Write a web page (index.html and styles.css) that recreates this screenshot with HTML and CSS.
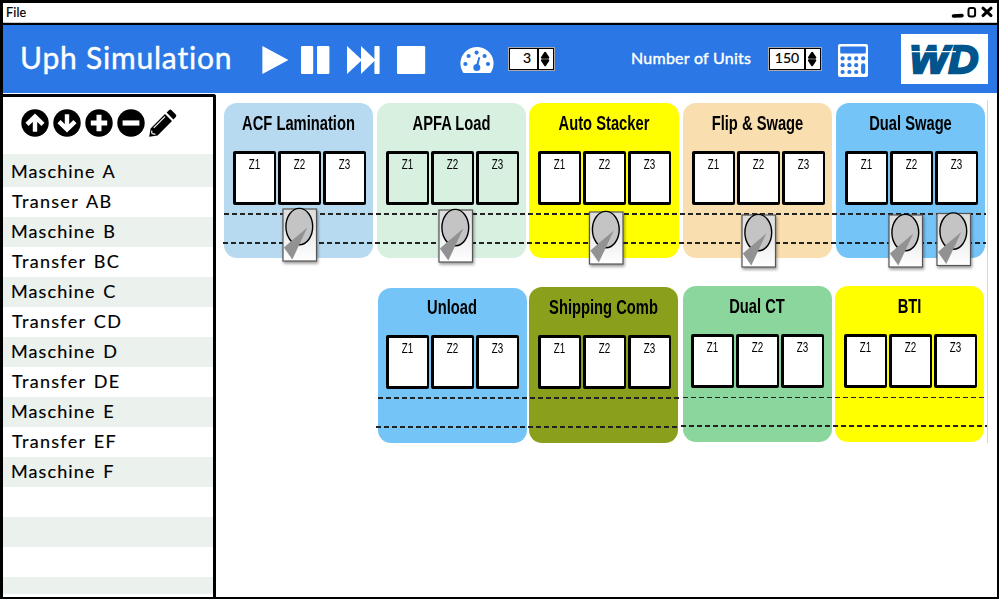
FILE: index.html
```
<!DOCTYPE html>
<html lang="en">
<head>
<meta charset="utf-8">
<title>Uph Simulation</title>
<link rel="stylesheet" href="styles.css">
</head>
<body>
<svg class="defs" width="0" height="0">
  <defs>
    <linearGradient id="plate" x1="0" y1="0" x2="0" y2="1"><stop offset="0" stop-color="#dcdcdc"/><stop offset="1" stop-color="#fff"/></linearGradient>
    <symbol id="wafer" viewBox="-2 -2 40 60">
      <rect x="0.5" y="1" width="33.5" height="52" fill="url(#plate)" stroke="#555" stroke-width="1.2"/>
      <ellipse cx="16.8" cy="18.6" rx="13.4" ry="18.2" fill="#c4c4c4" stroke="#000" stroke-width="1.4"/>
      <path d="M24.8 19.6 L9.8 51.6 L1.4 39.4 L10 32Z" fill="#929292"/>
    </symbol>
  </defs>
</svg>
<div class="window">
  <div class="titlebar">
    <span class="menu">File</span>
    <svg class="controls" width="44" height="17" viewBox="0 0 44 17">
      <path d="M3.5 13 L12 12.6" stroke="#000" stroke-width="3.6" stroke-linecap="round"/>
      <rect x="18.5" y="5" width="6.6" height="8.6" rx="2" fill="none" stroke="#000" stroke-width="2"/>
      <path d="M33 5.2 L41 12.6 M41 5.2 L33 12.6" stroke="#000" stroke-width="3" stroke-linecap="round"/>
    </svg>
  </div>
  <header class="header">
    <h1 class="title">Uph Simulation</h1>
    <svg class="player" width="164" height="30" viewBox="0 0 164 30" fill="#fff">
      <path d="M.4 1 L26.4 15 L.4 29Z"/>
      <rect x="39" y="1" width="12.2" height="28" rx="1.2"/><rect x="55" y="1" width="12.4" height="28" rx="1.2"/>
      <path d="M85 1 L99 14 V1 L112.4 14 V2 Q112.4 1 113.4 1 H116.6 Q117.6 1 117.6 2 V28 Q117.6 29 116.6 29 H113.4 Q112.4 29 112.4 28 V16 L99 29 V16 L85 29Z"/>
      <rect x="135" y="1" width="28.2" height="28" rx="1.2"/>
    </svg>
    <svg class="gauge" width="34" height="28" viewBox="0 0 34 28">
      <path d="M3 26.6 A16.6 16.6 0 1 1 31 26.6 Q30.6 27 30 27 H4 Q3.4 27 3 26.6Z" fill="#fff"/>
      <g fill="#2a77e5"><circle cx="5.4" cy="18" r="2.1"/><circle cx="8.6" cy="10" r="2.1"/><circle cx="16.6" cy="6.6" r="2.1"/><circle cx="24.6" cy="10" r="2.1"/><circle cx="28" cy="18" r="2.1"/><circle cx="16.8" cy="21.4" r="3.5"/><path d="M18.4 11 L20.2 11.4 L18 21 L15.8 20.4Z"/></g>
    </svg>
    <div class="spinner small"><span class="value">3</span><svg class="arrows" width="16" height="20" viewBox="0 0 16 20"><path d="M7 3 L10.6 8.4 H3.4Z M7 17 L10.6 11.6 H3.4Z" stroke="#000" stroke-width="2.4" stroke-linejoin="round"/></svg></div>
    <span class="units">Number of Units</span>
    <div class="spinner"><span class="value">150</span><svg class="arrows" width="16" height="20" viewBox="0 0 16 20"><path d="M7 3 L10.6 8.4 H3.4Z M7 17 L10.6 11.6 H3.4Z" stroke="#000" stroke-width="2.4" stroke-linejoin="round"/></svg></div>
    <svg class="calc" width="30" height="33" viewBox="0 0 30 33">
      <rect width="30" height="33" rx="2" fill="#fff"/>
      <g fill="#2a77e5"><rect x="2.2" y="2.4" width="25.6" height="7.2" rx="1"/>
      <circle cx="4.6" cy="14.4" r="2.1"/><circle cx="11.4" cy="14.4" r="2.1"/><circle cx="18.2" cy="14.4" r="2.1"/><circle cx="25.2" cy="14.4" r="2.1"/>
      <circle cx="4.6" cy="21.2" r="2.1"/><circle cx="11.4" cy="21.2" r="2.1"/><circle cx="18.2" cy="21.2" r="2.1"/>
      <circle cx="4.6" cy="28" r="2.1"/><circle cx="11.4" cy="28" r="2.1"/><circle cx="18.2" cy="28" r="2.1"/>
      <rect x="23.1" y="19.2" width="4.2" height="10.8" rx="2"/></g>
    </svg>
    <svg class="logo" width="87" height="50" viewBox="0 0 87 50">
      <rect width="87" height="50" fill="#fff"/>
      <text class="wd" x="8.5" y="38.8" textLength="69" lengthAdjust="spacingAndGlyphs">WD</text>
      <path d="M10 17.6 H55" stroke="#fff" stroke-width="1.1"/>
    </svg>
  </header>
  <div class="body">
    <aside class="sidebar">
      <svg class="tools" width="158" height="30" viewBox="0 0 158 30">
        <circle cx="14" cy="15" r="13.7"/><circle cx="46" cy="15" r="13.7"/><circle cx="78" cy="15" r="13.7"/><circle cx="110" cy="15" r="13.7"/>
        <g fill="none" stroke="#fff" stroke-width="4.4">
          <path d="M14 23.8 V9 M6 16.4 L14 8.6 L22 16.4"/>
          <path d="M46 6.2 V21 M38 13.6 L46 21.4 L54 13.6"/>
          <path d="M78 6.8 V23.2 M69.8 15 H86.2" stroke-width="5"/>
          <path d="M101.6 15 H118.4" stroke-width="5.2"/>
        </g>
        <path d="M128.2 28.8 L129.6 20.4 L144 6 L151 13 L136.6 27.4Z M145.6 4.6 L148 2.2 Q149.2 1 150.6 2.2 L154.8 6.4 Q156 7.6 154.8 9 L152.4 11.4Z"/>
        <path d="M132.8 19.8 L144 8.6 M130.6 22.6 L131 25.6 L134.4 26.4" fill="none" stroke="#fff" stroke-width="1.2"/>
      </svg>
      <ul class="list">
        <li>Maschine A</li><li class="t">Transer AB</li><li>Maschine B</li><li class="t">Transfer BC</li><li>Maschine C</li><li class="t">Transfer CD</li><li>Maschine D</li><li class="t">Transfer DE</li><li>Maschine E</li><li class="t">Transfer EF</li><li>Maschine F</li><li></li><li></li><li></li><li></li>
      </ul>
    </aside>
    <main class="plant">
      <section class="line first">
        <article class="machine lamination"><h2>ACF Lamination</h2><div class="zones"><div><span>Z1</span></div><div><span>Z2</span></div><div><span>Z3</span></div></div></article>
        <article class="machine apfa"><h2>APFA Load</h2><div class="zones"><div><span>Z1</span></div><div><span>Z2</span></div><div><span>Z3</span></div></div></article>
        <article class="machine stacker"><h2>Auto Stacker</h2><div class="zones"><div><span>Z1</span></div><div><span>Z2</span></div><div><span>Z3</span></div></div></article>
        <article class="machine flip"><h2>Flip &amp; Swage</h2><div class="zones"><div><span>Z1</span></div><div><span>Z2</span></div><div><span>Z3</span></div></div></article>
        <article class="machine swage"><h2>Dual Swage</h2><div class="zones"><div><span>Z1</span></div><div><span>Z2</span></div><div><span>Z3</span></div></div></article>
        <svg class="belt" width="768" height="175" viewBox="0 0 768 175">
          <path d="M5 111 H767 M4 140 H767" stroke="#222" stroke-width="2" stroke-dasharray="5 3"/>
          <g class="wafers">
            <use href="#wafer" x="61.5" y="103" width="40" height="60"/>
            <use href="#wafer" x="217.5" y="104" width="40" height="60"/>
            <use href="#wafer" x="368" y="106" width="40" height="60"/>
            <use href="#wafer" x="520.5" y="109" width="40" height="60"/>
            <use href="#wafer" x="667.5" y="109" width="40" height="60"/>
            <use href="#wafer" x="715.5" y="107.5" width="40" height="60"/>
          </g>
        </svg>
      </section>
      <section class="line second">
        <article class="machine unload"><h2>Unload</h2><div class="zones"><div><span>Z1</span></div><div><span>Z2</span></div><div><span>Z3</span></div></div></article>
        <article class="machine comb"><h2>Shipping Comb</h2><div class="zones"><div><span>Z1</span></div><div><span>Z2</span></div><div><span>Z3</span></div></div></article>
        <article class="machine ct"><h2>Dual CT</h2><div class="zones"><div><span>Z1</span></div><div><span>Z2</span></div><div><span>Z3</span></div></div></article>
        <article class="machine bti"><h2>BTI</h2><div class="zones"><div><span>Z1</span></div><div><span>Z2</span></div><div><span>Z3</span></div></div></article>
        <svg class="belt" width="768" height="160" viewBox="0 0 768 160">
          <g stroke="#222" stroke-width="2" stroke-dasharray="5 3" fill="none">
            <path d="M159 111 H461 M157 140 H459"/><path d="M464 110.5 H767" stroke-width="1"/><path d="M462 139 H768"/>
          </g>
        </svg>
      </section>
    </main>
  </div>
</div>
</body>
</html>
```
FILE: styles.css
```
* { box-sizing: border-box; }
body { margin: 0; font-family: Lato, sans-serif; color: #000; background: #fff; }
.defs { position: absolute; }
svg { display: block; flex: none; }
h1, h2, ul { margin: 0; padding: 0; font-weight: 400; }

.window { width: 999px; height: 599px; overflow: hidden; background: #fff; display: flex; flex-direction: column; border: solid #000; border-width: 3px 2px 2px 3px; }
.titlebar { height: 22px; flex: none; border-bottom: 2px solid #000; display: flex; justify-content: space-between; padding: 0 3px; box-shadow: inset 0 -1px #ccc; }
.menu { font-size: 12.5px; line-height: 19px; letter-spacing: .2px; -webkit-text-stroke: .2px; }

.header { height: 68px; flex: none; background: #2a77e5; color: #fff; display: flex; align-items: center; padding-left: 17px; }
.title { width: 242px; font-size: 30px; line-height: 40px; letter-spacing: .8px; white-space: nowrap; margin-top: -5px; -webkit-text-stroke: .4px; }
.player { margin-top: 1px; }
.gauge { margin-left: 34px; margin-top: 2px; }
.spinner { display: flex; width: 54px; height: 24px; border: 2px solid #000; outline: 1px solid #ffffffaa; outline-offset: -1px; background: #fff; color: #000; }
.small { width: 47px; margin-left: 14px; }
.value { flex: 1; text-align: center; font-size: 14px; line-height: 18px; -webkit-text-stroke: .2px; }
.small .value { padding-left: 7px; }
.arrows { border-left: 2px solid #000; }
.units { width: 137px; margin-left: 76px; margin-top: -3px; font-size: 16px; letter-spacing: .25px; white-space: nowrap; -webkit-text-stroke: .4px; }
.calc { margin-left: 16px; margin-top: 2px; }
.logo { margin-left: 33px; }
.wd { font: italic bold 39px "Liberation Sans", sans-serif; fill: #00558c; stroke: #00558c; stroke-width: 2.4px; }

.body { flex: 1; min-height: 0; display: flex; }
.sidebar { width: 213px; flex: none; border: solid #000; border-width: 3px 3px 0 0; border-top-right-radius: 3px; margin-top: 1px; overflow: hidden; }
.tools { margin: 11px 0 0 18px; }
.list { list-style: none; margin-top: 16px; }
.list li { height: 30px; line-height: 28px; padding-left: 8px; font-size: 18px; letter-spacing: 1.1px; word-spacing: 2px; -webkit-text-stroke: .15px; }
.list li:nth-child(odd) { background: #ebf2ee; }
.list li:first-child { height: 33px; padding-top: 3px; }
.list .t { padding-left: 9px; letter-spacing: 1.3px; }
.list li:last-child { height: 17px; }

.plant { width: 772px; height: 350px; padding: 10px 0 0 3px; background: linear-gradient(#d0d7df, #d0d7df) 771px 7px / 1px 343px no-repeat; }
.line { position: relative; display: flex; gap: 4px; height: 184px; padding-left: 5px; }
.belt { position: absolute; left: 0; top: 0; }
.second { padding-left: 159px; gap: 3px; }
.machine { width: 149px; height: 155px; border-radius: 13px; padding: 8px 0 0 9px; flex: none; }
.machine h2 { font: bold 19.5px/24px "Liberation Sans", sans-serif; text-align: center; white-space: nowrap; margin: 0 -20px 16px -29px; transform: scaleX(.755); }
.zones { display: flex; gap: 2px; }
.zones div { width: 43px; height: 54px; border: 3px solid #000; border-right-width: 2.5px; border-radius: 2px; background: #fff; text-align: center; }
.zones span { display: block; font: 14px/16px "Liberation Sans", sans-serif; margin: 2px 1px 0 0; transform: scaleX(.7); }
.lamination { background: #b8daf0; }
.apfa { background: #d8f0df; }
.apfa .zones div { background: none; }
.stacker { background: #ff0; width: 150px; margin-left: -1px; }
.flip { background: #f9deb0; }
.swage { background: #75c4f7; }
.second .machine { margin-top: 1px; padding: 7px 0 0 8px; }
.second .unload { background: #75c4f7; }
.second .comb { background: #8aa01c; margin-top: 0; padding: 8px 0 0 9px; margin-left: -1px; height: 156px; }
.second .ct { background: #8bd69c; margin-top: -1px; padding-top: 8px; margin-left: 2px; height: 156px; }
.second .bti { background: #ff0; margin-top: -1px; padding: 8px 0 0 9px; height: 156px; }
.wafers { filter: drop-shadow(1px 2px 1.5px #0006); }
```
